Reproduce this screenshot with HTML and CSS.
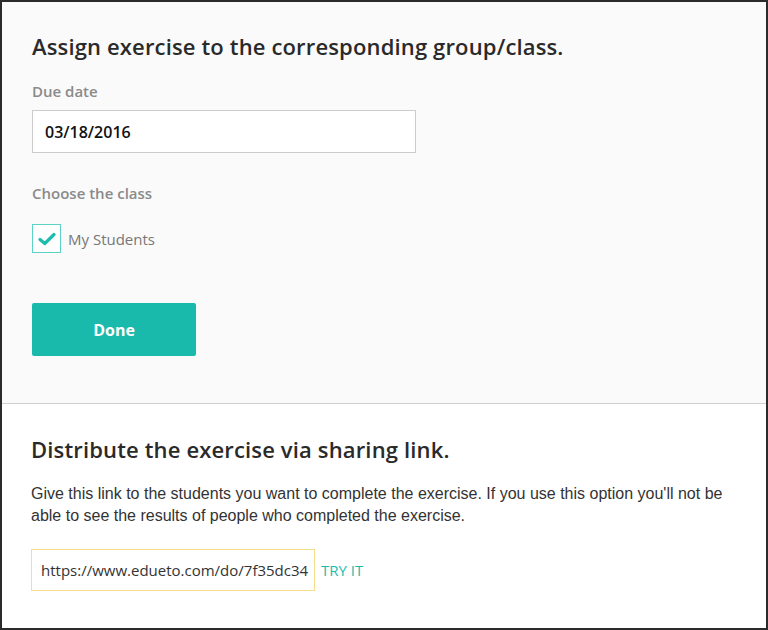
FILE: index.html
```html
<!DOCTYPE html>
<html lang="en">
<head>
  <meta charset="UTF-8">
  <title>Assign exercise</title>
  <link rel="stylesheet" href="styles.css">
</head>
<body>

  <div class="modal">
    <section class="assign">
      <h2>Assign exercise to the corresponding group/class.</h2>

      <label class="field-label" for="dueDate">Due date</label>
      <input type="text" id="dueDate" class="date-input" value="03/18/2016">

      <div class="field-label class-label">Choose the class</div>
      <label class="check-row">
        <span class="checkbox">
          <svg width="18" height="14" viewBox="0 0 18 14">
            <path d="M2 7.5 L6.8 11.5 L16 2.5" fill="none" stroke="#1ebcad" stroke-width="3.2" stroke-linecap="round" stroke-linejoin="round"/>
          </svg>
        </span>
        <span class="check-text">My Students</span>
      </label>

      <button type="button" class="done-btn">Done</button>
    </section>

    <section class="share">
      <h2>Distribute the exercise via sharing link.</h2>
      <p class="share-text">Give this link to the students you want to complete the exercise. If you use this option you'll not be able to see the results of people who completed the exercise.</p>
      <div class="link-row">
        <div class="link-box">https://www.edueto.com/do/7f35dc34</div>
        <a href="#" class="try-link">TRY IT</a>
      </div>
    </section>
  </div>

</body>
</html>
```

FILE: styles.css
```css
* {
  margin: 0;
  padding: 0;
  box-sizing: border-box;
}

body {
  width: 768px;
  height: 630px;
  background: #2b2b2b;
  font-family: 'Open Sans', 'Lato', sans-serif;
  overflow: hidden;
}

.modal {
  margin: 2px 2px 0 2px;
  height: 626px;
  background: #fff;
  display: flex;
  flex-direction: column;
}

h2 {
  font-size: 22px;
  line-height: 28px;
  font-weight: 600;
  color: #2a2a2a;
  letter-spacing: 0.15px;
}

/* Assign section */
.assign {
  background: #fafafa;
  padding: 30px 30px 0 30px;
  height: 402px;
  border-bottom: 1px solid #cfcfcf;
}

.field-label {
  display: block;
  margin-top: 21px;
  font-size: 15px;
  line-height: 20px;
  font-weight: 600;
  color: #8a8a8a;
}

.date-input {
  display: block;
  width: 384px;
  height: 43px;
  margin-top: 9px;
  padding: 0 12px;
  border: 1px solid #cccccc;
  background: #fff;
  font-family: 'Open Sans', sans-serif;
  font-size: 16px;
  font-weight: 600;
  color: #111;
  outline: none;
}

.class-label {
  margin-top: 30px;
}

.check-row {
  display: flex;
  align-items: center;
  gap: 7px;
  margin-top: 21px;
}

.checkbox {
  width: 29px;
  height: 29px;
  border: 1px solid #5cd3c7;
  background: #fff;
  display: flex;
  align-items: center;
  justify-content: center;
}

.check-text {
  font-size: 15px;
  color: #777;
}

.done-btn {
  display: block;
  margin-top: 50px;
  width: 164px;
  height: 53px;
  border: none;
  border-radius: 2px;
  background: #19baab;
  color: #fff;
  font-family: 'Open Sans', sans-serif;
  font-size: 16px;
  font-weight: 700;
  cursor: pointer;
}

/* Share section */
.share {
  padding: 31px 20px 0 29px;
}

.share-text {
  margin-top: 20px;
  font-family: 'Liberation Sans', sans-serif;
  font-size: 16px;
  line-height: 22px;
  color: #333;
  max-width: 712px;
}

.link-row {
  display: flex;
  align-items: center;
  gap: 6px;
  margin-top: 22px;
}

.link-box {
  width: 284px;
  height: 42px;
  border: 1px solid #f6df8a;
  padding: 0 9px;
  display: flex;
  align-items: center;
  font-size: 15px;
  color: #333;
  white-space: nowrap;
}

.try-link {
  font-size: 15px;
  color: #1ebcad;
  text-decoration: none;
}
```
